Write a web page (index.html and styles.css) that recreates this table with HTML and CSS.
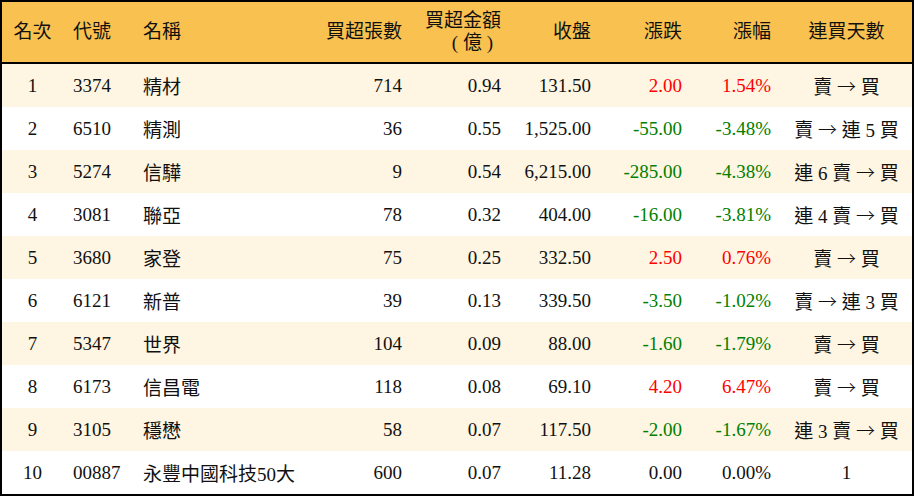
FILE: index.html
```html
<!DOCTYPE html>
<html lang="zh-Hant">
<head>
<meta charset="utf-8">
<title>買超排行</title>
<link rel="stylesheet" href="styles.css">
</head>
<body>
<table class="rank">
  <colgroup>
    <col class="c-rank"><col class="c-code"><col class="c-name"><col class="c-qty"><col class="c-amt"><col class="c-close"><col class="c-chg"><col class="c-pct"><col class="c-days">
  </colgroup>
  <thead>
    <tr>
      <th class="ctr">名次</th>
      <th class="lft">代號</th>
      <th class="lft">名稱</th>
      <th class="rgt">買超張數</th>
      <th class="rgt two">買超金額<br><span class="unit">( 億 )</span></th>
      <th class="rgt">收盤</th>
      <th class="rgt">漲跌</th>
      <th class="rgt">漲幅</th>
      <th class="ctr">連買天數</th>
    </tr>
  </thead>
  <tbody>
    <tr class="odd"><td class="ctr">1</td><td class="lft">3374</td><td class="lft">精材</td><td class="rgt">714</td><td class="rgt">0.94</td><td class="rgt">131.50</td><td class="rgt up">2.00</td><td class="rgt up">1.54%</td><td class="ctr">賣 <span class="arr">→</span> 買</td></tr>
    <tr><td class="ctr">2</td><td class="lft">6510</td><td class="lft">精測</td><td class="rgt">36</td><td class="rgt">0.55</td><td class="rgt">1,525.00</td><td class="rgt dn">-55.00</td><td class="rgt dn">-3.48%</td><td class="ctr">賣 <span class="arr">→</span> 連 5 買</td></tr>
    <tr class="odd"><td class="ctr">3</td><td class="lft">5274</td><td class="lft">信驊</td><td class="rgt">9</td><td class="rgt">0.54</td><td class="rgt">6,215.00</td><td class="rgt dn">-285.00</td><td class="rgt dn">-4.38%</td><td class="ctr">連 6 賣 <span class="arr">→</span> 買</td></tr>
    <tr><td class="ctr">4</td><td class="lft">3081</td><td class="lft">聯亞</td><td class="rgt">78</td><td class="rgt">0.32</td><td class="rgt">404.00</td><td class="rgt dn">-16.00</td><td class="rgt dn">-3.81%</td><td class="ctr">連 4 賣 <span class="arr">→</span> 買</td></tr>
    <tr class="odd"><td class="ctr">5</td><td class="lft">3680</td><td class="lft">家登</td><td class="rgt">75</td><td class="rgt">0.25</td><td class="rgt">332.50</td><td class="rgt up">2.50</td><td class="rgt up">0.76%</td><td class="ctr">賣 <span class="arr">→</span> 買</td></tr>
    <tr><td class="ctr">6</td><td class="lft">6121</td><td class="lft">新普</td><td class="rgt">39</td><td class="rgt">0.13</td><td class="rgt">339.50</td><td class="rgt dn">-3.50</td><td class="rgt dn">-1.02%</td><td class="ctr">賣 <span class="arr">→</span> 連 3 買</td></tr>
    <tr class="odd"><td class="ctr">7</td><td class="lft">5347</td><td class="lft">世界</td><td class="rgt">104</td><td class="rgt">0.09</td><td class="rgt">88.00</td><td class="rgt dn">-1.60</td><td class="rgt dn">-1.79%</td><td class="ctr">賣 <span class="arr">→</span> 買</td></tr>
    <tr><td class="ctr">8</td><td class="lft">6173</td><td class="lft">信昌電</td><td class="rgt">118</td><td class="rgt">0.08</td><td class="rgt">69.10</td><td class="rgt up">4.20</td><td class="rgt up">6.47%</td><td class="ctr">賣 <span class="arr">→</span> 買</td></tr>
    <tr class="odd"><td class="ctr">9</td><td class="lft">3105</td><td class="lft">穩懋</td><td class="rgt">58</td><td class="rgt">0.07</td><td class="rgt">117.50</td><td class="rgt dn">-2.00</td><td class="rgt dn">-1.67%</td><td class="ctr">連 3 賣 <span class="arr">→</span> 買</td></tr>
    <tr><td class="ctr">10</td><td class="lft">00887</td><td class="lft">永豐中國科技50大</td><td class="rgt">600</td><td class="rgt">0.07</td><td class="rgt">11.28</td><td class="rgt">0.00</td><td class="rgt">0.00%</td><td class="ctr">1</td></tr>
  </tbody>
</table>
</body>
</html>
```

FILE: styles.css
```css
html, body {
  margin: 0;
  padding: 0;
  background: #ffffff;
}

.rank {
  width: 914px;
  table-layout: fixed;
  border-collapse: separate;
  border-spacing: 0;
  border: 2px solid #000;
  font-family: "Liberation Serif", "Noto Sans CJK TC", serif;
  font-size: 19px;
  color: #111;
}

.c-rank { width: 61px; }
.c-code { width: 70px; }
.c-name { width: 177px; }
.c-qty { width: 102px; }
.c-amt { width: 99px; }
.c-close { width: 90px; }
.c-chg { width: 91px; }
.c-pct { width: 89px; }
.c-days { width: 131px; }

.rank th {
  background: #f9c150;
  font-weight: normal;
  height: 60px;
  padding: 0 10px;
  border-bottom: 2px solid #000;
  line-height: 22px;
  white-space: nowrap;
  vertical-align: middle;
}

.rank th.two {
  vertical-align: top;
  padding-top: 8px;
  height: 52px;
}

.unit {
  display: inline-block;
  padding-right: 8px;
  white-space: pre;
}

.rank td {
  height: 43px;
  padding: 0 10px;
  white-space: nowrap;
  vertical-align: middle;
}

.rank tr.odd td {
  background: #fef5e2;
}

.arr {
  display: inline-block;
  width: 19px;
  font-family: "Noto Sans CJK TC", sans-serif;
  font-weight: 300;
  text-align: center;
}

.ctr { text-align: center; }
.lft { text-align: left; }
.rgt { text-align: right; }

.rank th.ctr, .rank td.ctr { padding: 0; }

.up { color: #ff0000; }
.dn { color: #008000; }
```
